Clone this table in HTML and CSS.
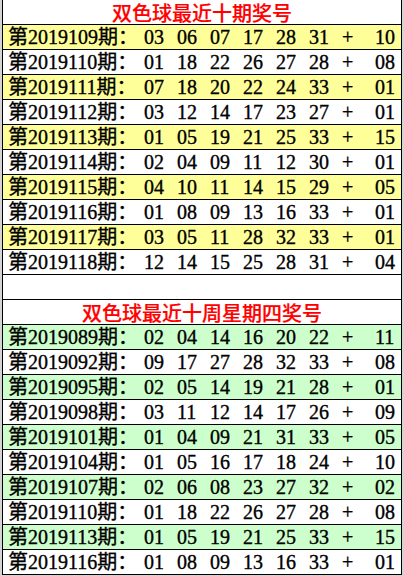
FILE: index.html
```html
<!DOCTYPE html>
<html lang="zh-CN">
<head>
  <meta charset="UTF-8" />
  <title>双色球最近十期奖号</title>
  <link rel="stylesheet" href="styles.css">
</head>
<body>

<div class="sheet">

  <!-- Block 1: last ten draws -->
  <div class="row title">双色球最近十期奖号</div>
  <div class="row yellow"><span class="issue">第2019109期：</span><span class="n">03</span><span class="n">06</span><span class="n">07</span><span class="n">17</span><span class="n">28</span><span class="n">31</span><span class="n">+</span><span class="n">10</span></div>
  <div class="row"><span class="issue">第2019110期：</span><span class="n">01</span><span class="n">18</span><span class="n">22</span><span class="n">26</span><span class="n">27</span><span class="n">28</span><span class="n">+</span><span class="n">08</span></div>
  <div class="row yellow"><span class="issue">第2019111期：</span><span class="n">07</span><span class="n">18</span><span class="n">20</span><span class="n">22</span><span class="n">24</span><span class="n">33</span><span class="n">+</span><span class="n">01</span></div>
  <div class="row"><span class="issue">第2019112期：</span><span class="n">03</span><span class="n">12</span><span class="n">14</span><span class="n">17</span><span class="n">23</span><span class="n">27</span><span class="n">+</span><span class="n">01</span></div>
  <div class="row yellow"><span class="issue">第2019113期：</span><span class="n">01</span><span class="n">05</span><span class="n">19</span><span class="n">21</span><span class="n">25</span><span class="n">33</span><span class="n">+</span><span class="n">15</span></div>
  <div class="row"><span class="issue">第2019114期：</span><span class="n">02</span><span class="n">04</span><span class="n">09</span><span class="n">11</span><span class="n">12</span><span class="n">30</span><span class="n">+</span><span class="n">01</span></div>
  <div class="row yellow"><span class="issue">第2019115期：</span><span class="n">04</span><span class="n">10</span><span class="n">11</span><span class="n">14</span><span class="n">15</span><span class="n">29</span><span class="n">+</span><span class="n">05</span></div>
  <div class="row"><span class="issue">第2019116期：</span><span class="n">01</span><span class="n">08</span><span class="n">09</span><span class="n">13</span><span class="n">16</span><span class="n">33</span><span class="n">+</span><span class="n">01</span></div>
  <div class="row yellow"><span class="issue">第2019117期：</span><span class="n">03</span><span class="n">05</span><span class="n">11</span><span class="n">28</span><span class="n">32</span><span class="n">33</span><span class="n">+</span><span class="n">01</span></div>
  <div class="row"><span class="issue">第2019118期：</span><span class="n">12</span><span class="n">14</span><span class="n">15</span><span class="n">25</span><span class="n">28</span><span class="n">31</span><span class="n">+</span><span class="n">04</span></div>

  <div class="row"></div>

  <!-- Block 2: last ten Thursday draws -->
  <div class="row title">双色球最近十周星期四奖号</div>
  <div class="row green"><span class="issue">第2019089期：</span><span class="n">02</span><span class="n">04</span><span class="n">14</span><span class="n">16</span><span class="n">20</span><span class="n">22</span><span class="n">+</span><span class="n">11</span></div>
  <div class="row"><span class="issue">第2019092期：</span><span class="n">09</span><span class="n">17</span><span class="n">27</span><span class="n">28</span><span class="n">32</span><span class="n">33</span><span class="n">+</span><span class="n">08</span></div>
  <div class="row green"><span class="issue">第2019095期：</span><span class="n">02</span><span class="n">05</span><span class="n">14</span><span class="n">19</span><span class="n">21</span><span class="n">28</span><span class="n">+</span><span class="n">01</span></div>
  <div class="row"><span class="issue">第2019098期：</span><span class="n">03</span><span class="n">11</span><span class="n">12</span><span class="n">14</span><span class="n">17</span><span class="n">26</span><span class="n">+</span><span class="n">09</span></div>
  <div class="row green"><span class="issue">第2019101期：</span><span class="n">01</span><span class="n">04</span><span class="n">09</span><span class="n">21</span><span class="n">31</span><span class="n">33</span><span class="n">+</span><span class="n">05</span></div>
  <div class="row"><span class="issue">第2019104期：</span><span class="n">01</span><span class="n">05</span><span class="n">16</span><span class="n">17</span><span class="n">18</span><span class="n">24</span><span class="n">+</span><span class="n">10</span></div>
  <div class="row green"><span class="issue">第2019107期：</span><span class="n">02</span><span class="n">06</span><span class="n">08</span><span class="n">23</span><span class="n">27</span><span class="n">32</span><span class="n">+</span><span class="n">02</span></div>
  <div class="row"><span class="issue">第2019110期：</span><span class="n">01</span><span class="n">18</span><span class="n">22</span><span class="n">26</span><span class="n">27</span><span class="n">28</span><span class="n">+</span><span class="n">08</span></div>
  <div class="row green"><span class="issue">第2019113期：</span><span class="n">01</span><span class="n">05</span><span class="n">19</span><span class="n">21</span><span class="n">25</span><span class="n">33</span><span class="n">+</span><span class="n">15</span></div>
  <div class="row"><span class="issue">第2019116期：</span><span class="n">01</span><span class="n">08</span><span class="n">09</span><span class="n">13</span><span class="n">16</span><span class="n">33</span><span class="n">+</span><span class="n">01</span></div>

</div>

</body>
</html>
```

FILE: styles.css
```css
body {
  margin: 0;
  background: #d4d4d4;
  height: 576px;
  overflow: hidden;
  font-family: 'Liberation Serif', 'Noto Sans CJK SC', serif;
}
.sheet {
  width: 398px;
  margin-left: 2px;
  border-left: 1px solid #000;
  border-right: 1px solid #000;
  background: #fff;
}
.row {
  height: 24px;
  border-bottom: 1px solid #000;
  display: flex;
  align-items: center;
  padding-left: 5px;
  font-size: 20px;
  line-height: 24px;
  color: #000;
  white-space: nowrap;
  -webkit-text-stroke: 0.35px #000;
}
.row.title {
  height: 22px;
  padding-top: 2px;
  line-height: 22px;
  justify-content: center;
  padding-left: 0;
  color: #ff0000;
  -webkit-text-stroke: 0.2px #ff0000;
  font-family: 'Noto Sans CJK SC', sans-serif;
  font-weight: 500;
}
.row.yellow {
  background: #ffff99;
}
.row.green {
  background: #ccffcc;
}
.issue {
  width: 136px;
  flex: none;
}
.n {
  width: 33px;
  flex: none;
}
```
